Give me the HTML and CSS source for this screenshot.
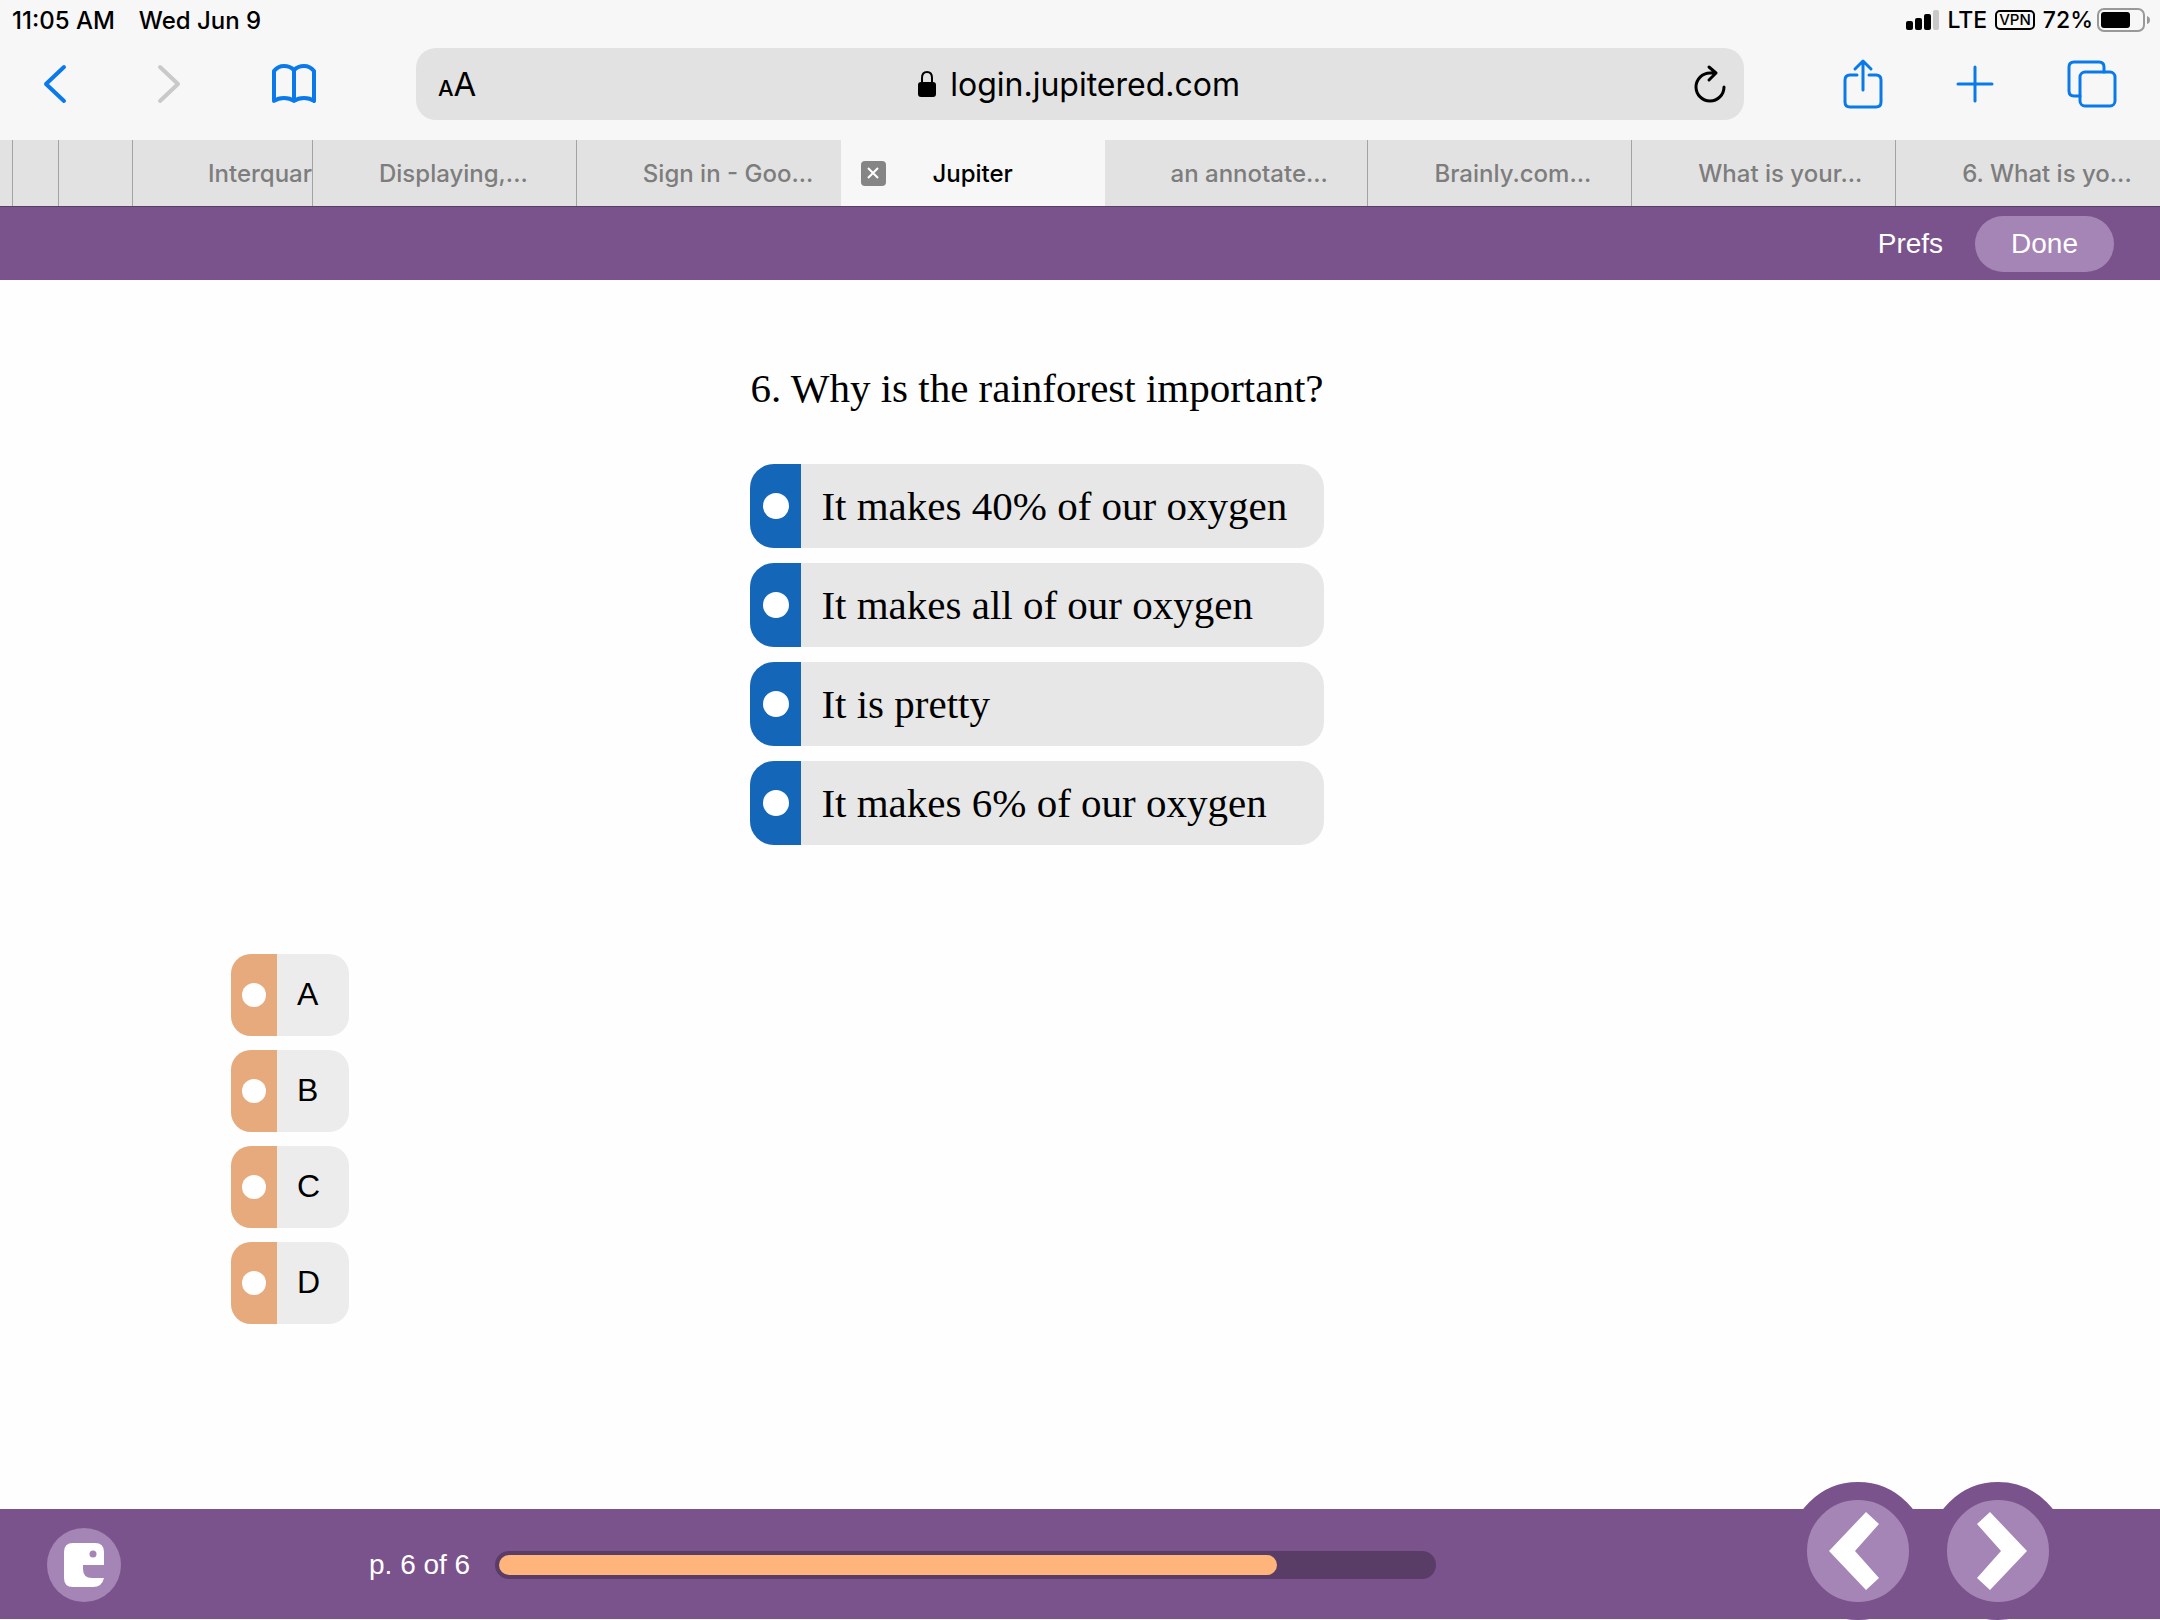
FILE: index.html
```html
<!DOCTYPE html>
<html lang="en">
<head>
    <meta charset="UTF-8">
    <meta name="viewport" content="width=device-width, initial-scale=1.0">
    <title>Jupiter</title>
    <link rel="stylesheet" href="styles.css">
</head>
<body>
    <div class="browser">
        <div class="status">
            <span>11:05 AM</span>
            <span class="date">Wed Jun 9</span>
            <div class="status-right">
                <svg width="34" height="20" viewBox="0 0 34 20">
                    <rect x="0" y="11" width="7" height="9" rx="2"/>
                    <rect x="9" y="8" width="7" height="12" rx="2"/>
                    <rect x="18" y="4" width="7" height="16" rx="2"/>
                    <rect x="27" y="0" width="6" height="20" rx="2" fill="#c8c8c8"/>
                </svg>
                <span>LTE</span>
                <span class="vpn">VPN</span>
                <span class="percent">72%</span>
                <svg width="53" height="24" viewBox="0 0 53 24">
                    <rect x="1" y="1" width="46" height="22" rx="6" fill="none" stroke="#999" stroke-width="2"/>
                    <rect x="4" y="4" width="29" height="16" rx="3"/>
                    <path d="M50 8q3 1 3 4t-3 4z" fill="#999"/>
                </svg>
            </div>
        </div>

        <div class="toolbar">
            <div class="tools left">
                <button aria-label="Back"><svg width="22" height="38" viewBox="0 0 22 38"><path d="M20 2L2 19l18 17"/></svg></button>
                <button aria-label="Forward" class="off"><svg width="22" height="38" viewBox="0 0 22 38"><path d="M2 2l18 17L2 36"/></svg></button>
                <button aria-label="Bookmarks"><svg width="44" height="38" viewBox="0 0 44 38"><path d="M22 5Q18 1 12 1T2 6V36Q6 33 12 33T22 36Q26 33 32 33T42 36V6Q38 1 32 1T22 5V36"/></svg></button>
            </div>
            <div class="address">
                <button class="text-size" aria-label="Text size"><small>A</small>A</button>
                <div class="url">
                    <svg width="18" height="26" viewBox="0 0 18 26">
                        <path d="M4 13V7Q4 1 9 1T14 7V13" fill="none" stroke="#000" stroke-width="2"/>
                        <rect x="0" y="11" width="18" height="15" rx="3"/>
                    </svg>
                    <input type="text" aria-label="Address" value="login.jupitered.com">
                </div>
                <button class="reload" aria-label="Reload"><svg width="32" height="38" viewBox="0 0 32 38"><path d="M22 8H16A14 14 0 1 0 30 22M15 2l7 6-7 7"/></svg></button>
            </div>
            <div class="tools right">
                <button aria-label="Share"><svg width="38" height="48" viewBox="0 0 38 48"><path d="M13 15H6Q1 15 1 20V42Q1 47 6 47H32Q37 47 37 42V20Q37 15 32 15H25M19 30V2M11 9l8-8 8 8"/></svg></button>
                <button aria-label="New tab"><svg width="36" height="38" viewBox="0 0 36 38"><path d="M1 19H35M18 2V36"/></svg></button>
                <button aria-label="Tabs"><svg width="48" height="48" viewBox="0 0 48 48"><path d="M12 36H6Q1 36 1 31V7Q1 2 6 2H31Q36 2 36 7V12"/><rect x="12" y="12" width="35" height="34" rx="5"/></svg></button>
            </div>
        </div>

        <div class="tabs">
            <button class="tab" aria-label="Tab 1"></button>
            <button class="tab" aria-label="Tab 2"></button>
            <button class="tab" aria-label="Tab 3"></button>
            <button class="tab partial">Interquar</button>
            <button class="tab">Displaying,...</button>
            <button class="tab last">Sign in - Goo...</button>
            <div class="tab active">
                <button class="close" aria-label="Close tab"><svg width="12" height="12" viewBox="0 0 12 12"><path d="M1 1l10 10M11 1L1 11"/></svg></button>
                <span>Jupiter</span>
            </div>
            <button class="tab">an annotate...</button>
            <button class="tab">Brainly.com...</button>
            <button class="tab">What is your...</button>
            <button class="tab last">6. What is yo...</button>
        </div>
    </div>

    <header class="topbar">
        <a href="#">Prefs</a>
        <button class="done">Done</button>
    </header>

    <main>
        <form class="question">
            <h1>6. Why is the rainforest important?</h1>
            <label class="choice"><span class="knob"><input type="radio" name="answer"></span><span class="text">It makes 40% of our oxygen</span></label>
            <label class="choice"><span class="knob"><input type="radio" name="answer"></span><span class="text">It makes all of our oxygen</span></label>
            <label class="choice"><span class="knob"><input type="radio" name="answer"></span><span class="text">It is pretty</span></label>
            <label class="choice"><span class="knob"><input type="radio" name="answer"></span><span class="text">It makes 6% of our oxygen</span></label>
        </form>

        <form class="letters">
            <label class="choice"><span class="knob"><input type="radio" name="letter"></span><span class="text">A</span></label>
            <label class="choice"><span class="knob"><input type="radio" name="letter"></span><span class="text">B</span></label>
            <label class="choice"><span class="knob"><input type="radio" name="letter"></span><span class="text">C</span></label>
            <label class="choice"><span class="knob"><input type="radio" name="letter"></span><span class="text">D</span></label>
        </form>
    </main>

    <footer>
        <button class="logo" aria-label="Jupiter menu">
            <svg width="40" height="44" viewBox="0 0 40 44">
                <path d="M9 0H31Q40 0 40 9V22H19V26Q19 35 28 35H40Q38 44 29 44H9Q0 44 0 35V9Q0 0 9 0Z" fill="#fff"/>
                <circle cx="29" cy="11" r="3.5" fill="#a585b6"/>
            </svg>
        </button>
        <label class="page" for="progress">p. 6 of 6</label>
        <progress id="progress" value="5" max="6"></progress>
        <button class="nav" aria-label="Previous page"><svg width="80" height="80" viewBox="-40 -40 80 80"><path d="M-29 0L8-39 21-27-3 0 21 27 8 39z"/></svg></button>
        <button class="nav" aria-label="Next page"><svg width="80" height="80" viewBox="-40 -40 80 80"><path d="M29 0L-8-39-21-27 3 0-21 27-8 39z"/></svg></button>
    </footer>
</body>
</html>
```
FILE: styles.css
```css
* {
    box-sizing: border-box;
}

body {
    margin: 0;
    min-height: 100vh;
    display: flex;
    flex-direction: column;
    background-color: #fefefe;
    color: #000;
    font-family: "Liberation Sans", Arial, sans-serif;
    font-size: 28px;
}

button {
    padding: 0;
    border: none;
    background: none;
    color: inherit;
    font: inherit;
    cursor: pointer;
}

svg {
    display: block;
}

/* browser bars */
.browser {
    background-color: #f7f7f7;
    font-family: Inter, sans-serif;
}

.status {
    display: flex;
    align-items: center;
    height: 48px;
    padding: 0 10px 8px 12px;
    font-size: 24px;
    font-weight: 500;
}

.date {
    margin-left: 24px;
}

.status-right {
    display: flex;
    align-items: center;
    gap: 8px;
    margin-left: auto;
    font-size: 23px;
}

.vpn {
    height: 20px;
    padding: 0 2px;
    border: 2px solid #000;
    border-radius: 5px;
    font-size: 15px;
    line-height: 16px;
}

.percent {
    margin-right: -4px;
}

.toolbar {
    display: flex;
    align-items: center;
    gap: 100px;
    padding: 0 44px 20px;
}

.tools {
    display: flex;
    align-items: center;
}

.tools.left {
    gap: 92px;
}

.tools.right {
    gap: 75px;
}

.tools svg,
.reload svg {
    overflow: visible;
    fill: none;
    stroke: #0a7aea;
    stroke-width: 3;
    stroke-linecap: round;
    stroke-linejoin: round;
}

.tools.left svg {
    stroke-width: 4;
}

.tools .off svg {
    stroke: #c9c9c9;
}

.address {
    flex: 1;
    display: flex;
    align-items: center;
    justify-content: space-between;
    height: 72px;
    padding: 0 18px 0 22px;
    background-color: #e2e2e2;
    border-radius: 20px;
}

.text-size {
    font-size: 33px;
}

.text-size small {
    font-size: 22px;
    font-weight: 500;
}

.url {
    display: flex;
    align-items: center;
    gap: 14px;
}

.url input {
    width: 302px;
    padding: 0;
    border: none;
    background: none;
    font-family: inherit;
    font-size: 32px;
}

.reload svg {
    stroke: #000;
}

.tabs {
    display: grid;
    grid-template-columns: 13px 46px 74px 180px repeat(7, minmax(0, 1fr));
    height: 66px;
    background-color: #e2e2e2;
}

.tab {
    padding-left: 66px;
    overflow: hidden;
    border-right: 1px solid #a3a3a3;
    color: #7d7d7d;
    font-size: 24px;
    font-weight: 500;
    text-align: left;
    white-space: nowrap;
}

.tab:empty {
    padding: 0;
}

.tab.last {
    border-right: none;
}

.tab.partial {
    padding-left: 75px;
}

.tab.active {
    display: flex;
    align-items: center;
    padding: 0 20px;
    border: none;
    background-color: #f7f7f7;
    color: #000;
}

.active span {
    flex: 1;
    padding-right: 25px;
    text-align: center;
}

.close {
    display: grid;
    place-items: center;
    width: 25px;
    height: 25px;
    border-radius: 4px;
    background-color: #858585;
}

.close svg {
    fill: none;
    stroke: #fff;
    stroke-width: 2;
}

/* quiz page */
.topbar {
    display: flex;
    align-items: center;
    justify-content: flex-end;
    gap: 32px;
    height: 74px;
    padding-right: 46px;
    border-top: 1px solid #584065;
    background-color: #7a538d;
    color: #fff;
}

.topbar a {
    color: #fff;
    text-decoration: none;
}

.done {
    height: 56px;
    padding: 0 36px;
    border-radius: 28px;
    background-color: #a585b6;
}

main {
    flex: 1;
    padding: 84px 317px 0 231px;
}

.question {
    width: fit-content;
    margin: 0 auto 109px;
    display: grid;
    gap: 15px;
    font-family: "Liberation Serif", "Times New Roman", serif;
    font-size: 41px;
}

h1 {
    margin: 0 0 37px;
    font-size: 41px;
    font-weight: normal;
    line-height: 48px;
}

.choice {
    display: flex;
    overflow: hidden;
    cursor: pointer;
}

.knob {
    display: grid;
    place-items: center;
}

.knob input {
    appearance: none;
    margin: 0;
    border-radius: 50%;
    background-color: #fff;
}

.question .choice {
    height: 84px;
    border-radius: 24px;
    background-color: #e7e7e7;
    line-height: 84px;
}

.question .knob {
    width: 51px;
    background-color: #1466b8;
}

.question input {
    width: 26px;
    height: 26px;
}

.text {
    padding: 0 20px;
}

.letters {
    width: fit-content;
    display: grid;
    gap: 14px;
    font-size: 32px;
}

.letters .choice {
    width: 118px;
    height: 82px;
    border-radius: 20px;
    background-color: #ececec;
    line-height: 80px;
}

.letters .knob {
    width: 46px;
    background-color: #e7aa7c;
}

.letters input {
    width: 24px;
    height: 24px;
}

footer {
    display: flex;
    align-items: center;
    height: 111px;
    padding: 2px 92px 0 47px;
    border-bottom: 1px solid #fefefe;
    background-color: #7a538d;
    color: #fff;
}

.logo {
    display: grid;
    place-items: center;
    width: 74px;
    height: 74px;
    border-radius: 50%;
    background-color: #a585b6;
}

.page {
    margin-left: 248px;
}

progress {
    appearance: none;
    flex: 1;
    height: 28px;
    margin: 0 352px 0 25px;
    border: 4px solid #593d66;
    border-radius: 14px;
    background-color: #593d66;
}

progress::-webkit-progress-bar {
    background-color: #593d66;
}

progress::-webkit-progress-value {
    border-radius: 10px;
    background-color: #ffb47c;
}

/* round buttons stick out above the footer */
.nav {
    display: grid;
    place-items: center;
    width: 138px;
    height: 138px;
    margin: -28px 1px 0;
    border: 18px solid #7a538d;
    border-radius: 50%;
    background-color: #a585b6;
}

.nav svg {
    fill: #fff;
}
```
